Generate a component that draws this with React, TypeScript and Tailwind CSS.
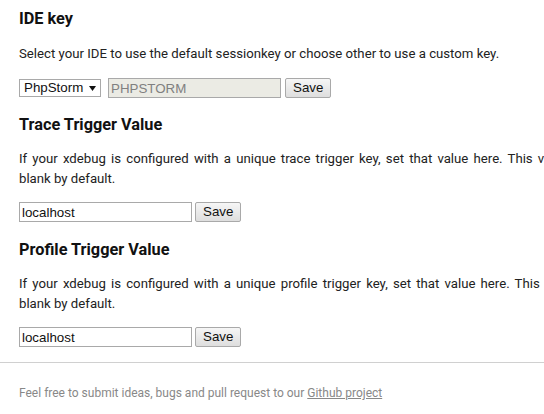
import React from "react";

const inputCls =
  "h-[20px] w-[173px] border border-[#a9a9a9] px-[2px] text-[13.33px] leading-[18px] outline-none [font-family:'Liberation_Sans',Arial,sans-serif]";
const btnCls =
  "h-[20px] rounded-[2px] border border-[#a9a9a9] bg-gradient-to-b from-[#f6f6f6] to-[#dedede] px-[7px] text-[13.33px] leading-[18px] text-[#111] [font-family:'Liberation_Sans',Arial,sans-serif]";

function Heading({ children }: { children: React.ReactNode }) {
  return (
    <h3 className="h-[20px] whitespace-nowrap text-[16.3px] font-bold leading-[20px] text-[#111]">
      {children}
    </h3>
  );
}

function TwoLine({ first, second, wide }: { first: string; second: string; wide?: boolean }) {
  return (
    <div className="leading-[20px] text-[13.2px]">
      <p
        className={
          (wide ? "w-[572px]" : "w-[565px]") +
          " whitespace-nowrap text-justify [text-align-last:justify]"
        }
      >
        {first}
      </p>
      <p className="whitespace-nowrap">{second}</p>
    </div>
  );
}

export default function App() {
  return (
    <div className="w-[544px] h-[414px] overflow-hidden bg-white [font-family:Roboto,'Noto_Sans',sans-serif] text-[13.2px] text-[#222]">
      <div className="pl-[19px] pt-[9px]">
        <Heading>IDE key</Heading>
        <p className="mt-[15px] whitespace-nowrap leading-[20px]">
          Select your IDE to use the default sessionkey or choose other to use a custom key.
        </p>
        <div className="mt-[14px] flex items-center">
          <div className="relative mr-[7px] h-[18px] w-[82px] border border-[#a9a9a9] bg-white [font-family:'Liberation_Sans',Arial,sans-serif] text-[13.33px] leading-[16px] text-[#111]">
            <span className="pl-[4px]">PhpStorm</span>
            <svg
              className="absolute right-[4px] top-[6px]"
              width="7"
              height="5"
              viewBox="0 0 7 5"
            >
              <path d="M0 0H7L3.5 5Z" fill="#111" />
            </svg>
          </div>
          <input
            className={inputCls + " bg-[#ebebe4] text-[#808080]"}
            value="PHPSTORM"
            disabled
            readOnly
          />
          <button className={btnCls + " ml-[4px]"}>Save</button>
        </div>

        <div className="mt-[17px]">
          <Heading>Trace Trigger Value</Heading>
        </div>
        <div className="mt-[14px]">
          <TwoLine
            first="If your xdebug is configured with a unique trace trigger key, set that value here. This value is"
            second="blank by default."
          />
        </div>
        <div className="mt-[13px] flex items-center">
          <input className={inputCls + " bg-white text-[#111]"} defaultValue="localhost" />
          <button className={btnCls + " ml-[3px]"}>Save</button>
        </div>

        <div className="mt-[18px]">
          <Heading>Profile Trigger Value</Heading>
        </div>
        <div className="mt-[14px]">
          <TwoLine
            wide
            first="If your xdebug is configured with a unique profile trigger key, set that value here. This value is"
            second="blank by default."
          />
        </div>
        <div className="mt-[13px] flex items-center">
          <input className={inputCls + " bg-white text-[#111]"} defaultValue="localhost" />
          <button className={btnCls + " ml-[3px]"}>Save</button>
        </div>
      </div>

      <div className="mt-[15px] border-t border-[#d0d0d0]" />

      <p className="mt-[22px] pl-[19px] text-[12px] leading-[16px] text-[#888]">
        Feel free to submit ideas, bugs and pull request to our{" "}
        <a className="underline text-[#888]" href="#">
          Github project
        </a>
      </p>
    </div>
  );
}
